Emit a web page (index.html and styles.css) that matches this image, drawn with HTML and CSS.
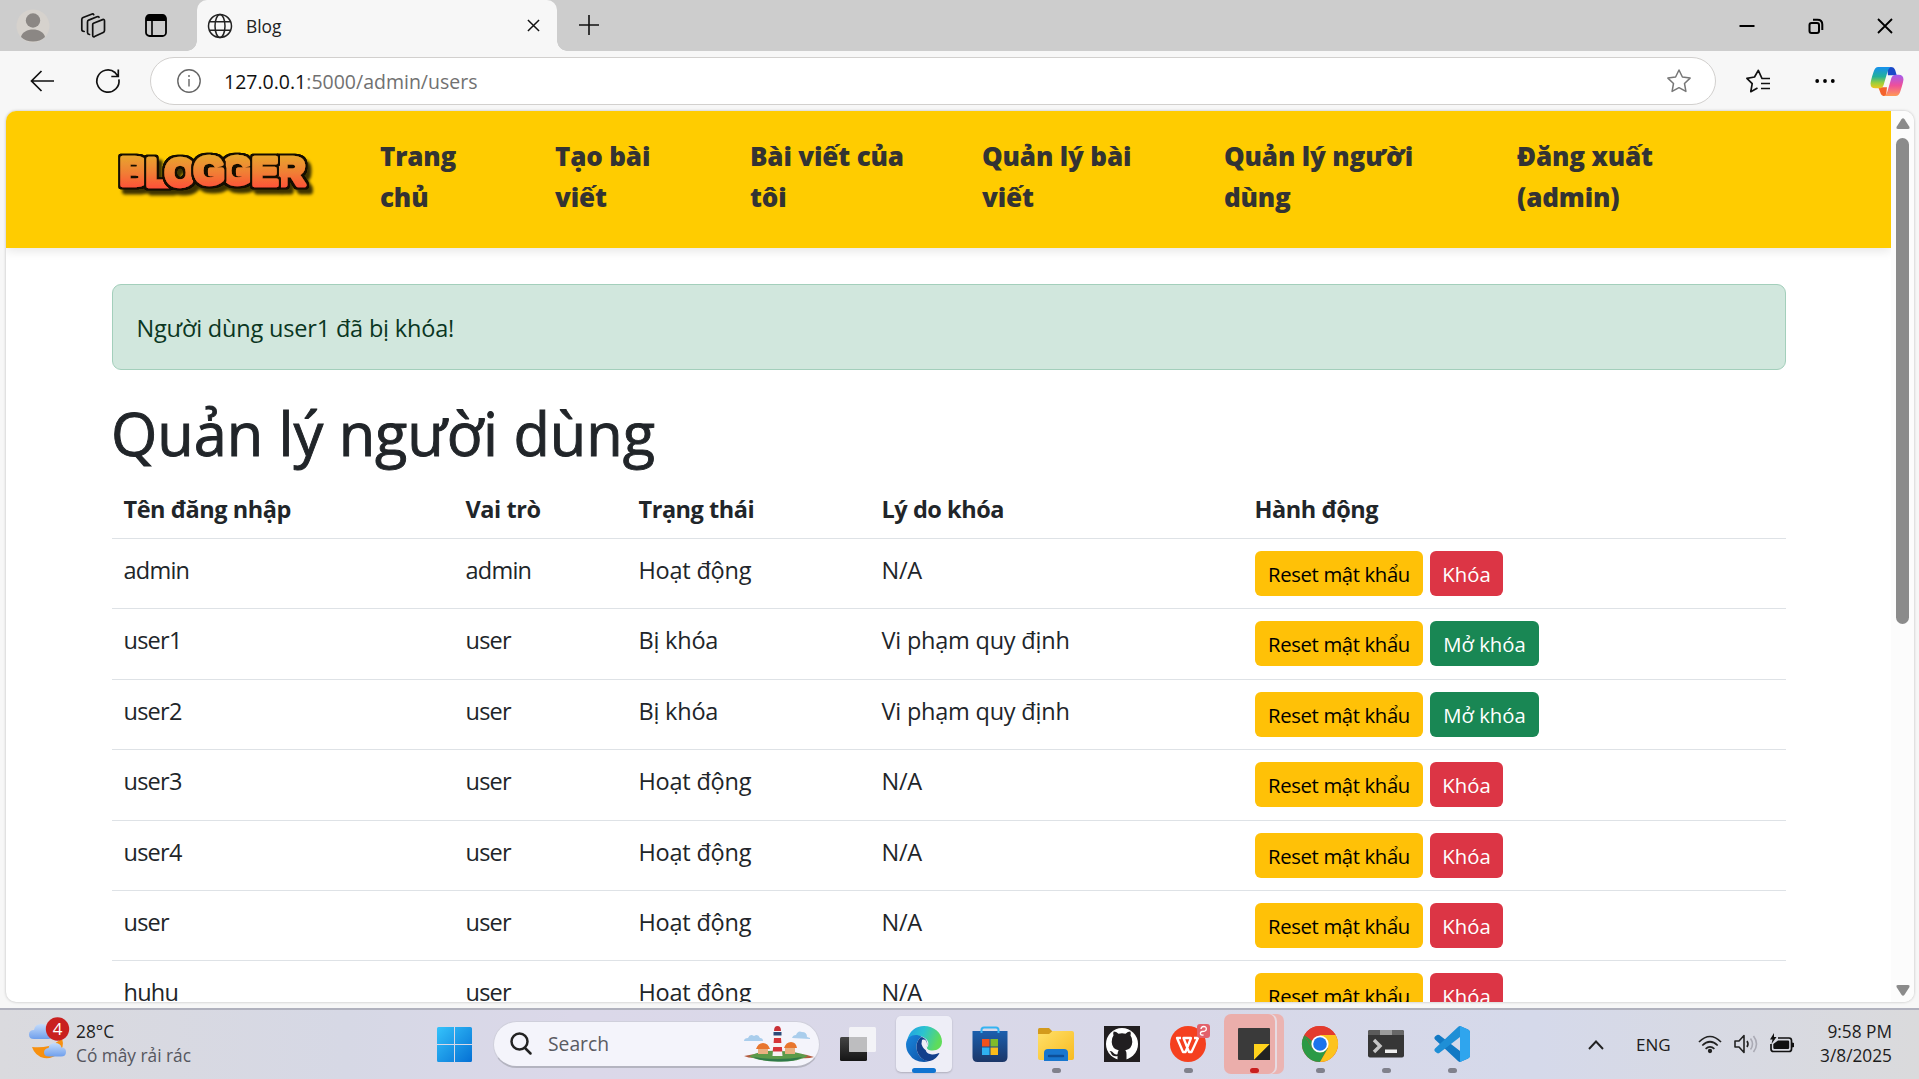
FILE: index.html
```html
<!DOCTYPE html>
<html lang="vi">
<head>
<meta charset="utf-8">
<title>Blog</title>
<link rel="stylesheet" href="styles.css">
</head>
<body>
<div class="desktop">
  <header class="tabstrip">
    <svg class="avatar" viewBox="0 0 34 34"><circle cx="17" cy="17" r="16.5" fill="#d6d2cd"/><circle cx="17" cy="11.5" r="7.2" fill="#8b8784"/><path d="M5 28c2-10 22-10 24 0-6 6-18 6-24 0z" fill="#8b8784"/></svg>
    <svg class="workspaces" viewBox="0 0 26 26" fill="none" stroke="#111" stroke-width="1.7" stroke-linejoin="round" stroke-linecap="round"><path d="M13.5 10.2 22.6 6.6q1.9-.6 1.9 1.3v9.6q0 1.400-1.300 2L14.500 23.600q-1.800.7-1.800-1.300V11.600q0-1 .8-1.400z"/><path d="M9.500 21.500q-2-.3-2-2V9q0-1.300 1.200-1.900L17 3.700q1.600-.5 2 .6"/><path d="M4.200 18.500q-2.400-.2-2.400-2V6.500q0-1.400 1.300-2L11.500 1.200q1.700-.6 2.200.5"/></svg>
    <svg class="tabactions" viewBox="0 0 22 23"><rect x="1" y="1" width="20" height="21" rx="3.500" fill="none" stroke="#000" stroke-width="1.800"/><path d="M1 7V4q0-3 3-3h14q3 0 3 3v3z"/><path d="M7 6v16" stroke="#000" stroke-width="1.600"/></svg>
    <div class="tab">
      <svg class="globe" viewBox="0 0 26 26" fill="none" stroke="#222" stroke-width="1.500"><circle cx="13" cy="13" r="11.500"/><ellipse cx="13" cy="13" rx="5" ry="11.500"/><path d="M2.500 8.700h21M2.500 17.300h21"/></svg>
      <span class="tab-title">Blog</span>
      <svg class="tab-close" viewBox="0 0 14 14" stroke="#111" stroke-width="1.600"><path d="M1 1l12 12M13 1 1 13"/></svg>
    </div>
    <svg class="newtab" viewBox="0 0 20 20" stroke="#111" stroke-width="1.600"><path d="M10 0v20M0 10h20"/></svg>
    <div class="wincontrols">
      <svg viewBox="0 0 16 16" stroke="#000" stroke-width="2"><path d="M0.500 8h15"/></svg>
      <svg viewBox="0 0 16 16" fill="none" stroke="#000" stroke-width="2"><rect x="1.500" y="5" width="9.500" height="10" rx="2"/><path d="M5 1.800h4.500q4.800 0 4.800 4.800V12"/></svg>
      <svg viewBox="0 0 16 16" stroke="#000" stroke-width="1.800"><path d="M1 1l14 14M15 1 1 15"/></svg>
    </div>
  </header>

  <div class="toolbar">
    <svg class="back" viewBox="0 0 24 22" fill="none" stroke="#111" stroke-width="1.700"><path d="M24 11H1.500M11.500 1 1.500 11l10 10"/></svg>
    <svg class="reload" viewBox="0 0 24 24" fill="none" stroke="#111" stroke-width="1.700"><path d="M22.900 10.300A11.100 11.100 0 1 1 19 3.500L22 7.200M22.300.5v7h-7"/></svg>
    <div class="address">
      <svg class="info" viewBox="0 0 24 24" fill="none" stroke="#666" stroke-width="1.400"><circle cx="12" cy="12" r="11.200"/><path d="M12 10v7.500M12 6v2"/></svg>
      <span class="url"><b>127.0.0.1</b>:5000/admin/users</span>
      <svg class="star" viewBox="0 0 24 24" fill="none" stroke="#777" stroke-width="1.500" stroke-linejoin="round"><path d="m12 1 3.400 7 7.700 1.100-5.600 5.400 1.400 7.900L12 18.700l-6.900 3.700 1.400-7.900L.9 9.100 8.600 8z"/></svg>
    </div>
    <svg class="favs" viewBox="0 0 24 24" fill="none" stroke="#111" stroke-width="1.700" stroke-linejoin="round"><path d="M24 9.500h-8L12.300 1.300 8.500 8 .9 9.300l5.300 5.400-1.400 8 6.700-3.700M15 14.500h9M15 19.500h9"/></svg>
    <svg class="more" viewBox="0 0 20 6"><circle cx="2.200" cy="3" r="1.900"/><circle cx="10" cy="3" r="1.900"/><circle cx="17.800" cy="3" r="1.900"/></svg>
    <svg class="copilot" viewBox="0 0 34 32">
      <defs>
        <linearGradient id="cpA" x1="0" y1="0" x2="0" y2="1"><stop offset="0" stop-color="#1690f0"/><stop offset=".45" stop-color="#22b09a"/><stop offset=".75" stop-color="#9ccf3a"/><stop offset="1" stop-color="#f2c51c"/></linearGradient>
        <linearGradient id="cpB" x1="0" y1="0" x2="0" y2="1"><stop offset="0" stop-color="#a35cf0"/><stop offset=".5" stop-color="#ee4f9b"/><stop offset="1" stop-color="#ff9a55"/></linearGradient>
      </defs>
      <path d="M17 1h4q3.500 0 4.500 3.500L27 9.500h-9z" fill="#1b49c8"/>
      <path d="M8 22h9l-1 9h-1q-4 0-5-4z" fill="#f4622c"/>
      <path d="M8 1h13q-2.500 1-3.500 5l-4 13.500q-1 3.500-5 3.500H5q-5 0-5-5Q.5 14 3 6.500 4.500 1 8 1z" fill="url(#cpA)"/>
      <path d="M26 31H14q2.500-1 3.500-5l4-13.500q1-3.500 5-3.500H29q5 0 5 5-.5 4-3 11.500Q29.500 31 26 31z" fill="url(#cpB)"/>
    </svg>
  </div>

  <div class="viewport">
    <div class="page">
      <nav class="navbar">
        <svg class="logo" viewBox="0 0 204 60" role="img" aria-label="BLOGGER">
          <defs>
            <linearGradient id="lg" gradientUnits="userSpaceOnUse" x1="0" y1="15" x2="0" y2="49"><stop offset="0" stop-color="#e8a62c"/><stop offset=".5" stop-color="#f08034"/><stop offset="1" stop-color="#ff4f38"/></linearGradient>
            <filter id="outline" filterUnits="userSpaceOnUse" x="-10" y="-10" width="230" height="80">
              <feMorphology in="SourceAlpha" operator="dilate" radius="1.600" result="fat"/>
              <feGaussianBlur in="fat" stdDeviation=".45" result="smooth"/>
              <feFlood flood-color="#120a04"/><feComposite in2="smooth" operator="in" result="edge"/>
              <feMerge><feMergeNode in="edge"/><feMergeNode in="edge"/><feMergeNode in="SourceGraphic"/></feMerge>
            </filter>
          </defs>
          <g class="logo-letters">
            <text x="5" y="45">B</text>
            <text x="31" y="46">L</text>
            <text x="50" y="46">O</text>
            <text x="107" y="44">G</text>
            <text x="79" y="44">G</text>
            <text x="162" y="45">R</text>
            <text x="137" y="45">E</text>
          </g>
        </svg>
        <ul class="menu">
          <li>Trang<br>chủ</li><li>Tạo bài<br>viết</li><li>Bài viết của<br>tôi</li><li>Quản lý bài<br>viết</li><li>Quản lý người<br>dùng</li><li>Đăng xuất<br>(admin)</li>
        </ul>
      </nav>
      <main class="content">
        <div class="alert">Người dùng user1 đã bị khóa!</div>
        <h1>Quản lý người dùng</h1>
        <table class="users">
          <colgroup><col class="c-name"><col class="c-role"><col class="c-state"><col class="c-reason"><col></colgroup>
          <thead><tr><th>Tên đăng nhập</th><th>Vai trò</th><th>Trạng thái</th><th>Lý do khóa</th><th>Hành động</th></tr></thead>
          <tbody>
            <tr><td>admin</td><td>admin</td><td>Hoạt động</td><td>N/A</td><td><div class="actions"><button class="btn warn">Reset mật khẩu</button><button class="btn lock">Khóa</button></div></td></tr>
            <tr><td>user1</td><td>user</td><td>Bị khóa</td><td>Vi phạm quy định</td><td><div class="actions"><button class="btn warn">Reset mật khẩu</button><button class="btn unlock">Mở khóa</button></div></td></tr>
            <tr><td>user2</td><td>user</td><td>Bị khóa</td><td>Vi phạm quy định</td><td><div class="actions"><button class="btn warn">Reset mật khẩu</button><button class="btn unlock">Mở khóa</button></div></td></tr>
            <tr><td>user3</td><td>user</td><td>Hoạt động</td><td>N/A</td><td><div class="actions"><button class="btn warn">Reset mật khẩu</button><button class="btn lock">Khóa</button></div></td></tr>
            <tr><td>user4</td><td>user</td><td>Hoạt động</td><td>N/A</td><td><div class="actions"><button class="btn warn">Reset mật khẩu</button><button class="btn lock">Khóa</button></div></td></tr>
            <tr><td>user</td><td>user</td><td>Hoạt động</td><td>N/A</td><td><div class="actions"><button class="btn warn">Reset mật khẩu</button><button class="btn lock">Khóa</button></div></td></tr>
            <tr><td>huhu</td><td>user</td><td>Hoạt động</td><td>N/A</td><td><div class="actions"><button class="btn warn">Reset mật khẩu</button><button class="btn lock">Khóa</button></div></td></tr>
          </tbody>
        </table>
      </main>
    </div>
    <div class="scrollbar">
      <svg viewBox="0 0 14 11"><path d="M5.500 1.200q1.500-1.800 3 0l5 7.800q.6 2-1.300 2H1.800Q-.1 11 .5 9z"/></svg>
      <div class="track"><div class="thumb"></div></div>
      <svg viewBox="0 0 14 11"><path d="M5.500 9.800q1.500 1.800 3 0l5-7.800q.6-2-1.300-2H1.800Q-.1 0 .5 2z"/></svg>
    </div>
  </div>

  <footer class="taskbar">
    <div class="weather">
      <svg viewBox="0 0 42 44">
        <defs><linearGradient id="cl" x1="0" y1="0" x2="0" y2="1"><stop offset="0" stop-color="#c4dcfb"/><stop offset="1" stop-color="#6f9fec"/></linearGradient></defs>
        <path d="M6 22q-5 0-5-4.500T6 13q1-6 7-6t7 5q5 0 5 5t-5 5z" fill="url(#cl)"/>
        <path d="M4 30q9 1 17-1 8-3 13-8 3 10-4 16-6 5-14 4-9-2-12-11z" fill="#f7900f"/>
        <path d="M21 39.500q-5 0-5-4t4.500-4.500q1-5 6.500-5t6.500 4.500q4.500 0 4.500 4.500t-5 4.500z" fill="url(#cl)"/>
        <circle cx="29.500" cy="12" r="11.700" fill="#c9201f"/>
        <text x="29.500" y="18" text-anchor="middle" class="badge-num">4</text>
      </svg>
      <div class="weather-text"><span>28°C</span><span class="sub">Có mây rải rác</span></div>
    </div>
    <svg class="start" viewBox="0 0 35 35"><defs><linearGradient id="win" x1="0" y1="0" x2="1" y2="1"><stop offset="0" stop-color="#35c3fb"/><stop offset="1" stop-color="#0570d4"/></linearGradient></defs><path d="M1.500 0H17v17H0V1.500Q0 0 1.500 0zM18 0h15.500Q35 0 35 1.500V17H18zM0 18h17v17H1.500Q0 35 0 33.500zM18 18h17v15.500q0 1.500-1.500 1.500H18z" fill="url(#win)"/></svg>
    <div class="search">
      <svg class="lens" viewBox="0 0 22 23" fill="none" stroke="#222" stroke-width="2.500" stroke-linecap="round"><circle cx="9.500" cy="9.500" r="8"/><path d="m15 16 5.500 5.500"/></svg>
      <span>Search</span>
      <svg class="scene" viewBox="0 0 70 36">
        <path d="M0 15q0-3 4-3 2-5 6-2 4-3 6 2 3 0 3 3zM48 12q1-3 4-3 2-5 6-3 5 0 5 5l3 1v1z" fill="#a9cdec"/>
        <path d="M0 30q8-2 16-2h38q8 0 16 3-6 2-14 1H10q-6 0-10-2z" fill="#b4593c"/>
        <path d="M5 30Q18 24 34 25q18 0 30 5-10 6-30 5.500Q13 35 5 30z" fill="#5c9a4a"/>
        <path d="M9 31q24 4 50 0-9 5-25 4.500Q16 35 9 31z" fill="#2f7a4a"/>
        <path d="M14 22h10v6H14zM41 22h10v6H41z" fill="#e9b080"/><path d="M12 23q2-6 7-6t7 6zM40 22q2-6 7-6t6 6z" fill="#e8762e"/>
        <path d="M30.500 8h6l2 22h-10z" fill="#f6f2f2"/><path d="M30 12h7l.4 5h-7.800zM29.200 21h8.700l.4 4.500h-9.600z" fill="#d63438"/><path d="M29.500 6h8v3.500h-8z" fill="#2c4a78"/><path d="M30 5q0-5 3.500-5T37 5z" fill="#c93036"/>
      </svg>
    </div>
    <div class="apps">
      <div class="app"><svg viewBox="0 0 36 36"><defs><linearGradient id="tv" x1="0" y1="0" x2="0" y2="1"><stop offset="0" stop-color="#444"/><stop offset="1" stop-color="#151515"/></linearGradient></defs><rect x="0" y="11" width="27" height="24" rx="1.500" fill="url(#tv)"/><rect x="9" y="1" width="27" height="25" rx="1.500" fill="#f6f6f8" opacity=".88"/><path d="M9 11h18v15H10.500Q9 26 9 24.500z" fill="#bdbdbf"/></svg></div>
      <div class="app active"><svg viewBox="0 0 36 36">
        <defs><linearGradient id="eg1" x1="0" y1="0" x2="1" y2=".3"><stop offset="0" stop-color="#1f9be6"/><stop offset=".5" stop-color="#2cc3d0"/><stop offset="1" stop-color="#5fdc5a"/></linearGradient><linearGradient id="eg2" x1="0" y1="0" x2="1" y2="1"><stop offset="0" stop-color="#1a86dc"/><stop offset="1" stop-color="#0d4fa4"/></linearGradient></defs>
        <path d="M1 15C3 5 10 0 18 0c10 0 18 7 18 15.500 0 6-4.500 9-9.500 9-4 0-6-1.500-5.500-3 2-2 2-6-1-8.500C14 8 5 9 1 15z" fill="url(#eg1)"/>
        <path d="M0 18C1 9 10 7 16 11c-3 1-6 5-5.500 11 .5 7 6 13 13 13Q20 36 18 36 8 36 3 28 0 24 0 18z" fill="url(#eg2)"/>
        <path d="M10.500 21c0-5 2.500-9 5.500-10 4 1.500 6 5 5 9-3 3-1 8 5 8.500 4 .2 6-1.500 7.500-1.500-3 6-8 8.500-12 8-6-1-11-7-11-14z" fill="#123f8c"/>
        <path d="M16 14c4-2 6 3 4.700 7.500q-.5 1.500 2 3-4 0-6-3.500t-.7-7z" fill="#eeeef6"/>
      </svg></div>
      <div class="app"><svg viewBox="0 0 36 36"><defs><linearGradient id="ms" x1="0" y1="0" x2="0" y2="1"><stop offset="0" stop-color="#1b5fae"/><stop offset="1" stop-color="#1c3768"/></linearGradient></defs><path d="M.5 5h35v26q0 5-5 5h-25q-5 0-5-5z" fill="url(#ms)"/><path d="M9.500 7V4q0-2.500 2.500-2.500h12Q26.500 1.500 26.500 4v3" fill="none" stroke="#35b4f2" stroke-width="2"/><path d="M10 13h7.500v7.500H10z" fill="#f1511b"/><path d="M18.500 13H26v7.500h-7.500z" fill="#80bb2a"/><path d="M10 21.500h7.500V29H10z" fill="#2fb0f0"/><path d="M18.500 21.500H26V29h-7.500z" fill="#fbbc1a"/></svg></div>
      <div class="app running"><svg viewBox="0 0 36 36"><defs><linearGradient id="fe" x1="0" y1="0" x2="1" y2="1"><stop offset="0" stop-color="#ffe06a"/><stop offset="1" stop-color="#f8bb20"/></linearGradient></defs><path d="M0 3.500Q0 2 1.500 2H11l4 4v6H0z" fill="#d39a1c"/><path d="M0 8h11l3.500-3H34q2 0 2 2v25q0 2-2 2H2q-2 0-2-2z" fill="url(#fe)"/><path d="M6 35V27q0-4 4-4h16q4 0 4 4v8z" fill="#1877cf"/><path d="M11 30h14" stroke="#0d4f98" stroke-width="2.500" stroke-linecap="round"/></svg></div>
      <div class="app"><svg viewBox="0 0 36 36"><path d="M0 0h36v36H0z" fill="#211e20"/><circle cx="18" cy="18" r="16" fill="#fff"/><path d="M9.500 9.500q-.7-2.500.2-4 2.500 0 4.800 2.200 3.500-.8 7 0 2.300-2.200 4.800-2.200.9 1.500.2 4Q28.500 12 28.300 16q-.3 7-7 8.200 1.400 1.500 1.200 4V34h-9v-4q-5 1-6.500-3-.7-1.300-1.500-2 2.500-.3 4 2 1.500 2 4 1.200.2-2.500 1.200-4-6.700-1.200-7-8.200-.2-4 1.800-6.500z" fill="#211e20"/></svg></div>
      <div class="app running"><svg viewBox="0 0 36 36"><circle cx="18" cy="18" r="18" fill="#f5401f"/><path d="M11 12H7l6 14h2.500L21 12h-7.500l5.500 14h2.500L28 12h-4" fill="none" stroke="#fff" stroke-width="2.300" stroke-linejoin="round"/></svg><svg class="wps-badge" viewBox="0 0 13 14"><rect width="13" height="14" rx="3" fill="#e2616b"/><path d="M4 5q0-2.500 2.700-2.500T9.300 5Q9.300 7.500 5 7.500 3 8 3.500 10q.5 1.500 3 1" fill="none" stroke="#fff" stroke-width="1.300"/></svg></div>
      <div class="app running alerting"><svg viewBox="0 0 36 36"><rect x="2" y="2" width="32" height="32" rx="1" fill="#3a3a3a"/><path d="M18 18h16L18 34z" fill="#ffd21c"/><path d="M34 18v16H18z" fill="#222"/></svg></div>
      <div class="app running"><svg viewBox="0 0 36 36"><circle cx="18" cy="18" r="18" fill="#e33b2e"/><path d="M2.400 9A18 18 0 0 0 18 36l7.800-13.500L18 18 10.200 22.500z" fill="#2b9a45"/><path d="M33.600 9A18 18 0 0 1 18 36l7.800-13.500L18 9z" fill="#fcc31e"/><path d="M2.400 9A18 18 0 0 1 33.600 9H18l-7.800 4.500v9z" fill="#e33b2e"/><path d="M2.400 9l7.800 13.500L14 18z" fill="#2b9a45"/><circle cx="18" cy="18" r="8.600" fill="#fff"/><circle cx="18" cy="18" r="6.800" fill="#1b74ec"/></svg></div>
      <div class="app running"><svg viewBox="0 0 36 36"><rect y="4" width="36" height="27.500" rx="2" fill="#363636"/><path d="M0 9V6q0-2 2-2h10v5z" fill="#5b5b5b"/><path d="M12 4h12v5H12z" fill="#9b9b9b"/><path d="M24 4h10q2 0 2 2v3H24z" fill="#666"/><path d="m6 14 6 6-6 6" fill="none" stroke="#c6c6c6" stroke-width="3.400"/><path d="M17 23.500h12v3.500H17z" fill="#eee"/></svg></div>
      <div class="app running"><svg viewBox="0 0 36 36"><path d="M26 0l8 3.500Q36 4.500 36 6.500v23q0 2-2 3L26 36q-1 0-2-1L1 13.500q-1.500-1.500 0-3L3 9q1-.7 2.300 0L26 25z" fill="#1279c4"/><path d="M26 11 5.300 27q-1.300.8-2.300 0l-2-1.600q-1.500-1.300 0-2.800L24 1q1-1 2-1l1 3z" fill="#1f8fd6"/><path d="M26 0l8 3.500Q36 4.500 36 6.500v23q0 2-2 3L26 36z" fill="#2fa5ee"/></svg></div>
    </div>
    <div class="tray">
      <svg class="chev" viewBox="0 0 16 10" fill="none" stroke="#222" stroke-width="1.900"><path d="m1 9 7-7.500L15 9"/></svg>
      <span class="lang">ENG</span>
      <svg class="wifi" viewBox="0 0 24 18" fill="none" stroke="#222" stroke-width="1.700"><path d="M1 7q11-11 22 0M4.300 10.500q7.700-7.500 15.400 0M7.600 13.800q4.400-4 8.800 0"/><circle cx="12" cy="16" r="1.300" fill="#222"/></svg>
      <svg class="speaker" viewBox="0 0 24 20" fill="none" stroke="#222" stroke-width="1.600" stroke-linejoin="round"><path d="M1 7h4l5-5.500v17L5 13H1z"/><path d="M13 7q2 3 0 6"/><path d="M16.500 4.500q4 5.500 0 11M19.500 2q6 8 0 16" stroke="#aaaab4"/></svg>
      <svg class="battery" viewBox="0 0 24 20"><path d="M8 5h11q2.500 0 2.500 2.500v8.500q0 2.500-2.500 2.500H3.500Q1 18.500 1 16v-5" fill="none" stroke="#111" stroke-width="1.700"/><path d="M8 7.500h10q1.200 0 1.200 1.200v6q0 1.300-1.200 1.300H4.500q-1.200 0-1.200-1.300V11zM22 9.500l2 .5v4l-2 .5zM4 0 0 6.500h2.500L1.500 11 6.500 4H4z" fill="#111"/></svg>
      <div class="clock"><span>9:58 PM</span><span>3/8/2025</span></div>
    </div>
  </footer>
</div>
</body>
</html>
```
FILE: styles.css
```css
* { box-sizing: border-box; }
body { margin: 0; font-family: "Open Sans", "Noto Sans", sans-serif; color: #212529; }
svg { display: block; flex: none; overflow: visible; }
.desktop { width: 100vw; height: 100vh; display: flex; flex-direction: column; overflow: hidden; background: #f7f7f7; }

/* Tab strip */
.tabstrip { height: 51px; flex: none; display: flex; align-items: center; background: #cdcdcd; padding-left: 16px; }
.avatar { width: 34px; height: 34px; margin-right: 30px; }
.workspaces { width: 26px; height: 26px; margin-right: 39px; }
.tabactions { width: 22px; height: 23px; margin-right: 30px; }
.tab { position: relative; width: 360px; height: 51px; display: flex; align-items: center; padding: 0 17px 0 10px; background: #f7f7f7; border-radius: 10px 10px 0 0; font-size: 17.400px; color: #222; }
.tab::before, .tab::after { content: ""; position: absolute; bottom: 0; width: 10px; height: 10px; }
.tab::before { left: -10px; background: radial-gradient(circle at 0 0, #cdcdcd 9.500px, #f7f7f7 10px); }
.tab::after { right: -10px; background: radial-gradient(circle at 100% 0, #cdcdcd 9.500px, #f7f7f7 10px); }
.globe { width: 26px; height: 26px; margin-right: 13px; }
.tab-title { flex: 1; }
.tab-close { width: 13px; height: 13px; }
.newtab { width: 20px; height: 20px; margin: 0 0 2px 22px; }
.wincontrols { margin-left: auto; display: flex; gap: 53px; padding-right: 26px; }
.wincontrols svg { width: 16px; height: 16px; }

/* Toolbar */
.toolbar { height: 60px; flex: none; display: flex; align-items: center; padding-left: 30px; }
.back { width: 24px; height: 22px; margin-right: 42px; }
.reload { width: 24px; height: 24px; margin-right: 30px; }
.address { width: 1566px; height: 48px; display: flex; align-items: center; padding: 0 24px 0 26px; border: 1px solid #d2d0ce; border-radius: 24px; background: #fff; }
.info { width: 24px; height: 24px; margin-right: 23px; }
.url { flex: 1; font-size: 19.500px; color: #717171; }
.url b { font-weight: 400; color: #111; }
.star { width: 24px; height: 24px; }
.favs { width: 24px; height: 24px; margin-left: 30px; }
.more { width: 20px; height: 6px; margin-left: 45px; }
.copilot { width: 34px; height: 31px; margin-left: 35px; }

/* Web page */
.viewport { height: 891px; flex: none; margin: 0 5px 0 6px; display: flex; background: #fff; border-radius: 10px; overflow: hidden; box-shadow: 0 0 3px rgba(0, 0, 0, .25); }
.page { width: 1885px; overflow: hidden; }
.navbar { height: 137px; display: flex; background: #fc0; box-shadow: 0 3px 10px rgba(0, 0, 0, .1); }
.logo { width: 204px; height: 60px; margin: 29px 61px 0 109px; }
.logo-letters { filter: drop-shadow(4px 5px 1.500px #3e3300); }
.logo-letters text { font: 700 39px "Liberation Sans", sans-serif; fill: url(#lg); stroke: url(#lg); stroke-width: 4.500px; stroke-linejoin: round; filter: url(#outline); }
.menu { list-style: none; margin: 0; padding: 25px 0 0; display: grid; grid-template-columns: 175px 195px 232px 242px 293px 180px; font-size: 26px; font-weight: 800; line-height: 40.500px; letter-spacing: -.15px; color: #333; white-space: nowrap; }
.content { width: 1674px; margin: 36px 0 0 106px; }
.alert { height: 86px; padding: 25px 23.500px; border: 1px solid #a3cfbb; border-radius: 9px; background: #d1e7dd; color: #0a3622; font-size: 23.500px; line-height: 37px; letter-spacing: -.18px; }
h1 { margin: 27px 0 9px -1px; font-size: 59.500px; font-weight: 500; line-height: 72px; letter-spacing: -.05px; -webkit-text-stroke: .9px #212529; }
.users { width: 100%; table-layout: fixed; border-collapse: collapse; font-size: 23.500px; line-height: 36px; letter-spacing: -.22px; }
.c-name { width: 342px; }
.c-role { width: 173px; }
.c-state { width: 243px; }
.c-reason { width: 373px; }
.users th, .users td { padding: 13px 12px 0 11.500px; text-align: left; vertical-align: top; border-bottom: 1px solid #dee2e6; }
.users th { height: 60.500px; font-weight: 700; letter-spacing: -.45px; }
.users td { height: 70.400px; }
.users td:nth-child(-n+2) { letter-spacing: -.75px; }
.users td:last-child { padding: 12px 12px 0; }
.actions { display: flex; gap: 7px; }
.btn { height: 45px; padding: 1px 0 0; border: 0; border-radius: 6px; font: 400 20.300px/44px "Open Sans", "Noto Sans", sans-serif; color: #fff; }
.warn { width: 168px; background: #ffc107; color: #000; letter-spacing: -.35px; }
.lock { width: 73px; background: #dc3545; }
.unlock { width: 109px; background: #198754; }
.scrollbar { flex: 1; display: flex; flex-direction: column; align-items: center; padding: 7px 0 6px; background: #fcfcfc; }
.scrollbar svg { width: 14px; height: 11px; fill: #8b8b8b; }
.track { flex: 1; padding-top: 9px; }
.thumb { width: 13px; height: 486px; border-radius: 7px; background: #8b8b8b; }

/* Taskbar */
.taskbar { position: relative; height: 71px; flex: none; margin-top: 6px; display: flex; align-items: center; border-top: 2px solid #b0b1bd; background: linear-gradient(90deg, #dadade, #d6d8e5 18%, #dbd8e9 30%, #d8d8e8 60%, #d5d9ea 80%, #dadadc); }
.weather { width: 408px; padding: 0 0 2px 28px; display: flex; }
.weather svg { width: 42px; height: 44px; margin-top: -3px; }
.badge-num { font: 400 17px "Open Sans", sans-serif; fill: #fff; }
.weather-text { display: flex; flex-direction: column; padding-left: 6px; font-size: 17.300px; line-height: 24px; color: #222; }
.weather-text .sub { color: #55565e; }
.start { width: 35px; height: 35px; margin-left: 29px; }
.search { width: 327px; height: 47px; margin: 0 5px 1px 21px; display: flex; align-items: center; padding: 0 5px 0 16px; border: 1px solid #cfcfdb; border-bottom: 2px solid #b4b4c0; border-radius: 24px; background: #f4f4fb; font-size: 19.300px; color: #5a5b62; }
.search span { flex: 1; padding-left: 16px; }
.lens { width: 22px; height: 23px; }
.scene { width: 70px; height: 36px; }
.apps { display: flex; height: 69px; }
.app { position: relative; width: 66px; display: flex; justify-content: center; padding-top: 16px; }
.app > svg { position: relative; width: 36px; height: 36px; }
.app.running::after, .app.active::after { content: ""; position: absolute; top: 58px; left: 29px; width: 9px; height: 5px; border-radius: 3px; background: #80818c; }
.app.active::after { left: 21px; width: 24px; background: #0f74d1; }
.app.active::before { content: ""; position: absolute; left: 5px; top: 6px; width: 56px; height: 56px; border-radius: 5px; background: #eeeef7; box-shadow: 0 1px 2px rgba(0, 0, 0, .2); }
.app.alerting::before { content: ""; position: absolute; left: 3px; top: 4px; width: 51px; height: 60px; border-radius: 7px; background: #ebaeab; box-shadow: 2px 0 0 #e7dbe2, 9px 0 0 #ebb4b2; }
.app.alerting::after { background: #c91f1f; }
.app > .wps-badge { position: absolute; left: 42px; top: 14px; width: 13px; height: 14px; }
.tray { margin-left: auto; display: flex; align-items: center; padding-right: 27px; color: #1c1c1c; }
.chev { width: 16px; height: 10px; margin-right: 32px; }
.lang { width: 62px; font-size: 17px; }
.wifi { width: 24px; height: 18px; margin: 0 12px 2px 0; }
.speaker { width: 24px; height: 20px; margin: 0 12px 2px 0; }
.battery { width: 24px; height: 20px; margin-bottom: 4px; }
.clock { width: 98px; display: flex; flex-direction: column; text-align: right; font-size: 17.300px; line-height: 24px; padding-bottom: 2px; }
```
